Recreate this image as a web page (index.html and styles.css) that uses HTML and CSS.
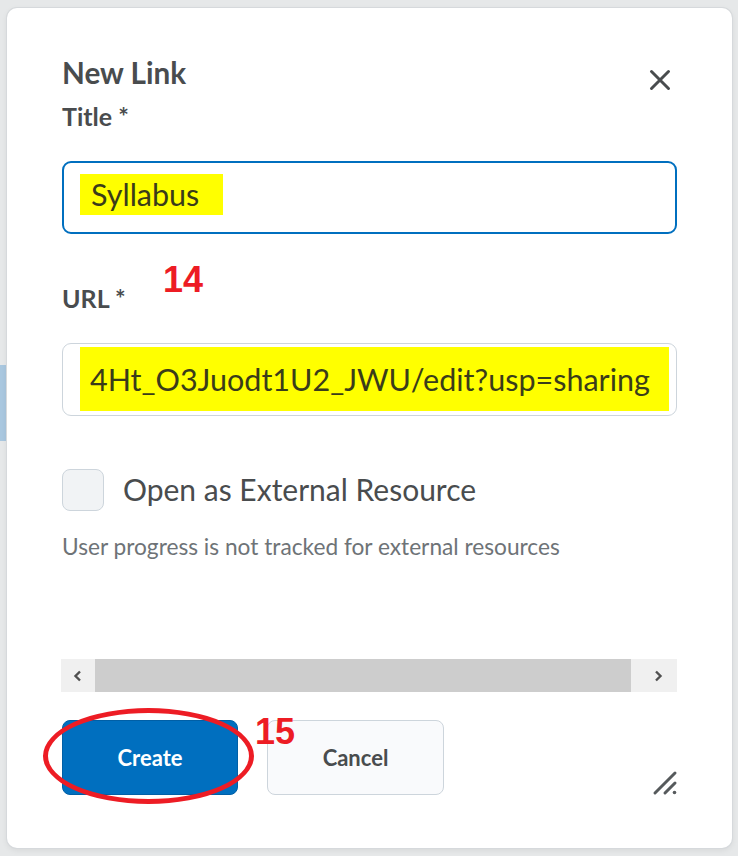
FILE: index.html
```html
<!DOCTYPE html>
<html lang="en">
<head>
<meta charset="utf-8">
<title>New Link</title>
<link rel="stylesheet" href="styles.css">
</head>
<body>
<div class="backdrop">
  <div class="bg-strip"></div>
  <div class="dialog">
    <div class="header">
      <h2 class="title">New Link</h2>
      <button class="close" aria-label="Close">
        <svg width="22" height="22" viewBox="0 0 22 22"><path d="M2.5 2.5 L19.5 19.5 M19.5 2.5 L2.5 19.5" stroke="#494c4e" stroke-width="3" stroke-linecap="round" fill="none"/></svg>
      </button>
    </div>
    <div class="label label-title">Title *</div>
    <div class="input input-focus"><span class="hl hl-title">Syllabus</span></div>
    <div class="label label-url">URL *<span class="anno anno-14">14</span></div>
    <div class="input"><span class="hl hl-url">4Ht_O3Juodt1U2_JWU/edit?usp=sharing</span></div>
    <div class="check-row">
      <span class="checkbox"></span>
      <span class="check-label">Open as External Resource</span>
    </div>
    <p class="help">User progress is not tracked for external resources</p>
    <div class="hscroll">
      <span class="sb-btn sb-left"><svg width="10" height="12" viewBox="0 0 10 12"><path d="M7 1.5 L2.5 6 L7 10.5" stroke="#505050" stroke-width="2.4" fill="none"/></svg></span>
      <span class="sb-thumb"></span>
      <span class="sb-btn sb-right"><svg width="10" height="12" viewBox="0 0 10 12"><path d="M3 1.5 L7.5 6 L3 10.5" stroke="#505050" stroke-width="2.4" fill="none"/></svg></span>
    </div>
    <div class="footer">
      <div class="btn-wrap">
        <button class="btn btn-primary">Create</button>
        <span class="ring"></span>
        <span class="anno anno-15">15</span>
      </div>
      <button class="btn btn-secondary">Cancel</button>
      <span class="resize">
        <svg width="26" height="26" viewBox="0 0 26 26"><path d="M3 23 L23 3 M13 23 L23 13" stroke="#565a5c" stroke-width="3" stroke-linecap="round" fill="none"/><circle cx="22.5" cy="22.5" r="1.8" fill="#565a5c"/></svg>
      </span>
    </div>
  </div>
</div>
</body>
</html>
```

FILE: styles.css
```css
* { box-sizing: border-box; }
html, body { margin: 0; padding: 0; }
body {
  background: #e6e8e9;
  font-family: Lato, "Noto Sans", sans-serif;
  color: #494c4e;
  width: 738px;
  height: 856px;
  overflow: hidden;
}
.backdrop {
  position: relative;
  padding: 8px 6px 8px 7px;
  height: 856px;
}
.bg-strip {
  position: absolute;
  left: 0;
  top: 365px;
  width: 7px;
  height: 76px;
  background: #a9c7df;
}
.dialog {
  position: relative;
  background: #ffffff;
  border-radius: 10px;
  box-shadow: 0 0 0 1px #d6d9dc, 0 2px 6px rgba(0,0,0,0.08);
  height: 840px;
  padding: 48px 55px 0 55px;
}
.header {
  display: flex;
  justify-content: space-between;
  align-items: flex-start;
}
.title {
  margin: 0;
  font-size: 29.7px;
  line-height: 34px;
  font-weight: 700;
  color: #494c4e;
}
.close {
  background: none;
  border: 0;
  padding: 0;
  margin: 13px 6px 0 0;
  width: 22px;
  height: 22px;
  display: flex;
}
.label {
  font-size: 25px;
  line-height: 28px;
  font-weight: 700;
  color: #494c4e;
  position: relative;
}
.label-title { margin-top: 11px; margin-bottom: 31px; }
.label-url { margin-top: 50px; margin-bottom: 31px; }
.input {
  height: 73px;
  border: 1px solid #cdd5dc;
  border-radius: 9px;
  display: flex;
  align-items: center;
  padding-left: 17px;
  padding-bottom: 4px;
  font-size: 30.5px;
  color: #494c4e;
  white-space: nowrap;
  overflow: hidden;
}
.input-focus {
  border: 2px solid #006fbf;
  padding-left: 16px;
}
.hl {
  background: #ffff00;
  color: #3a3c1a;
}
.hl-title {
  padding: 5px 24px 6px 11px;
  line-height: 30px;
  margin-top: -2px;
}
.hl-url {
  padding: 0 19px 0 10px;
  line-height: 64px;
  margin-top: 2px;
}
.check-row {
  margin-top: 53px;
  display: flex;
  align-items: center;
  gap: 19px;
}
.checkbox {
  width: 42px;
  height: 42px;
  border: 1px solid #cdd5dc;
  border-radius: 8px;
  background: #f1f3f5;
}
.check-label {
  font-size: 30px;
  line-height: 34px;
  color: #494c4e;
  margin-top: -2px;
}
.help {
  margin: 23px 0 0;
  font-size: 22.7px;
  line-height: 26px;
  color: #6e7377;
}
.hscroll {
  margin-top: 99px;
  margin-left: -1px;
  height: 33px;
  display: flex;
  background: #f0f0f0;
}
.sb-btn {
  display: flex;
  align-items: center;
  justify-content: center;
  width: 34px;
}
.sb-right { width: 46px; padding-left: 8px; }
.sb-thumb {
  flex: 1;
  background: #cdcdcd;
}
.footer {
  margin-top: 28px;
  display: flex;
  align-items: flex-start;
  gap: 29px;
  position: relative;
}
.btn-wrap { position: relative; }
.btn {
  font-family: Lato, "Noto Sans", sans-serif;
  font-size: 22px;
  font-weight: 700;
  height: 75px;
  width: 176px;
  border-radius: 8px;
  display: flex;
  align-items: center;
  justify-content: center;
}
.btn-primary {
  background: #006fbf;
  border: 1px solid #005fa6;
  color: #ffffff;
}
.btn-secondary {
  width: 177px;
  background: #f9fafc;
  border: 1px solid #cdd5dc;
  color: #494c4e;
}
.ring {
  position: absolute;
  left: -19px;
  top: -12px;
  width: 211px;
  height: 96px;
  border: 5px solid #ed1c24;
  border-radius: 50%;
}
.anno {
  position: absolute;
  color: #ed1c24;
  font-family: "Liberation Sans", Arial, sans-serif;
  font-weight: 700;
  font-size: 36px;
  line-height: 36px;
}
.anno-14 { left: 101px; top: -22px; }
.anno-15 { left: 193px; top: -6px; }
.resize {
  position: absolute;
  right: -1px;
  top: 50px;
  width: 26px;
  height: 26px;
}
```
